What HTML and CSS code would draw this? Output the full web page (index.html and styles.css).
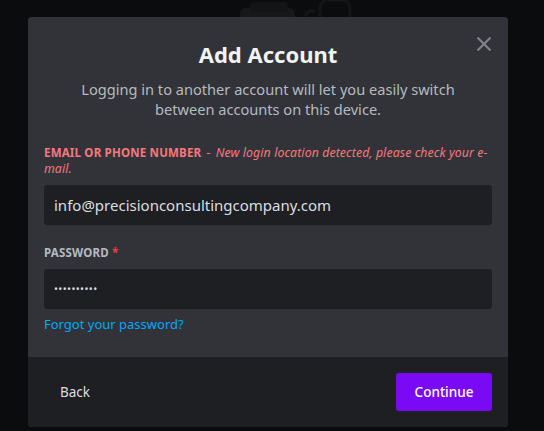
FILE: index.html
```html
<!DOCTYPE html>
<html>
<head>
<meta charset="utf-8">
<link rel="stylesheet" href="styles.css">
</head>
<body>
<div class="backdrop">
  <svg class="bg-art" width="180" height="20" viewBox="0 0 180 20">
    <rect x="40" y="8" width="55" height="20" rx="6" fill="#17181a"/>
    <rect x="50" y="2" width="38" height="10" rx="4" fill="#131416"/>
    <path d="M105 16 q5 -8 10 -4" stroke="#151618" stroke-width="3" fill="none"/>
    <rect x="120" y="0" width="30" height="22" rx="8" fill="none" stroke="#141517" stroke-width="3"/>
  </svg>
</div>
<div class="stage">
  <div class="modal">
    <div class="body">
      <button class="close" aria-label="Close">
        <svg width="16" height="16" viewBox="0 0 16 16"><path d="M1.5 1.5 L14.5 14.5 M14.5 1.5 L1.5 14.5" stroke="#80848e" stroke-width="2" fill="none"/></svg>
      </button>
      <h1 class="title">Add Account</h1>
      <p class="desc">Logging in to another account will let you easily switch between accounts on this device.</p>
      <div class="field">
        <div class="label error">EMAIL OR PHONE NUMBER <span class="err-msg"><span class="dash">-</span> New login location detected, please check your e-mail.</span></div>
        <div class="input">info@precisionconsultingcompany.com</div>
      </div>
      <div class="field pw">
        <div class="label">PASSWORD <span class="req">*</span></div>
        <div class="input dots">••••••••••</div>
        <a class="forgot">Forgot your password?</a>
      </div>
    </div>
    <div class="footer">
      <button class="back">Back</button>
      <button class="continue">Continue</button>
    </div>
  </div>
</div>
</body>
</html>
```
FILE: styles.css
```css
* { box-sizing: border-box; }
html, body { margin: 0; padding: 0; }
body {
  width: 544px;
  height: 431px;
  background: #0b0c0e;
  font-family: "Noto Sans", "Open Sans", sans-serif;
  overflow: hidden;
  position: relative;
}
.backdrop { position: absolute; left: 0; top: 0; width: 544px; height: 431px; }
.bg-art { position: absolute; left: 200px; top: 0; }
.stage {
  position: relative;
  padding: 17px 0 0 28px;
}
.modal {
  width: 480px;
  height: 410px;
  border-radius: 4px;
  overflow: hidden;
  background: #313338;
  display: flex;
  flex-direction: column;
}
.body {
  position: relative;
  padding: 22px 16px 0 16px;
  height: 340px;
}
.close {
  position: absolute;
  right: 16px;
  top: 19px;
  width: 16px;
  height: 16px;
  padding: 0;
  border: 0;
  background: none;
  display: flex;
}
.title {
  margin: 0;
  text-align: center;
  font-size: 22px;
  line-height: 30px;
  font-weight: 700;
  color: #f2f3f5;
}
.desc {
  margin: 10px 0 0 0;
  padding: 0 20px;
  text-align: center;
  font-size: 14.6px;
  line-height: 20px;
  color: #b5bac1;
}
.field { margin-top: 26px; }
.field.pw { margin-top: 20px; }
.label {
  font-size: 11.5px;
  line-height: 16px;
  font-weight: 700;
  color: #b5bac1;
  letter-spacing: 0.2px;
}
.label.error { color: #fa777c; }
.err-msg {
  font-style: italic;
  font-weight: 400;
  letter-spacing: 0.1px;
  font-size: 12.3px;
}
.dash { padding: 0 2px; }
.req { color: #f23f42; }
.input {
  margin-top: 8px;
  height: 40px;
  border-radius: 3px;
  background: #1e1f22;
  color: #dbdee1;
  font-size: 15px;
  line-height: 40px;
  padding: 0 10px;
}
.input.dots {
  font-size: 10.5px;
  letter-spacing: 0.4px;
  color: #dbdee1;
}
.forgot {
  display: block;
  margin-top: 7px;
  font-size: 13px;
  line-height: 16px;
  color: #00a8fc;
}
.footer {
  flex: 1;
  background: #1e1f22;
  padding: 16px;
  display: flex;
  justify-content: space-between;
  align-items: center;
}
button { font-family: inherit; cursor: pointer; }
.back {
  border: 0;
  background: none;
  color: #dbdee1;
  font-size: 13.5px;
  padding: 2px 16px;
}
.continue {
  width: 96px;
  height: 38px;
  border: 0;
  border-radius: 3px;
  background: #7a0af4;
  color: #ffffff;
  font-size: 13.5px;
  font-weight: 500;
}
```
